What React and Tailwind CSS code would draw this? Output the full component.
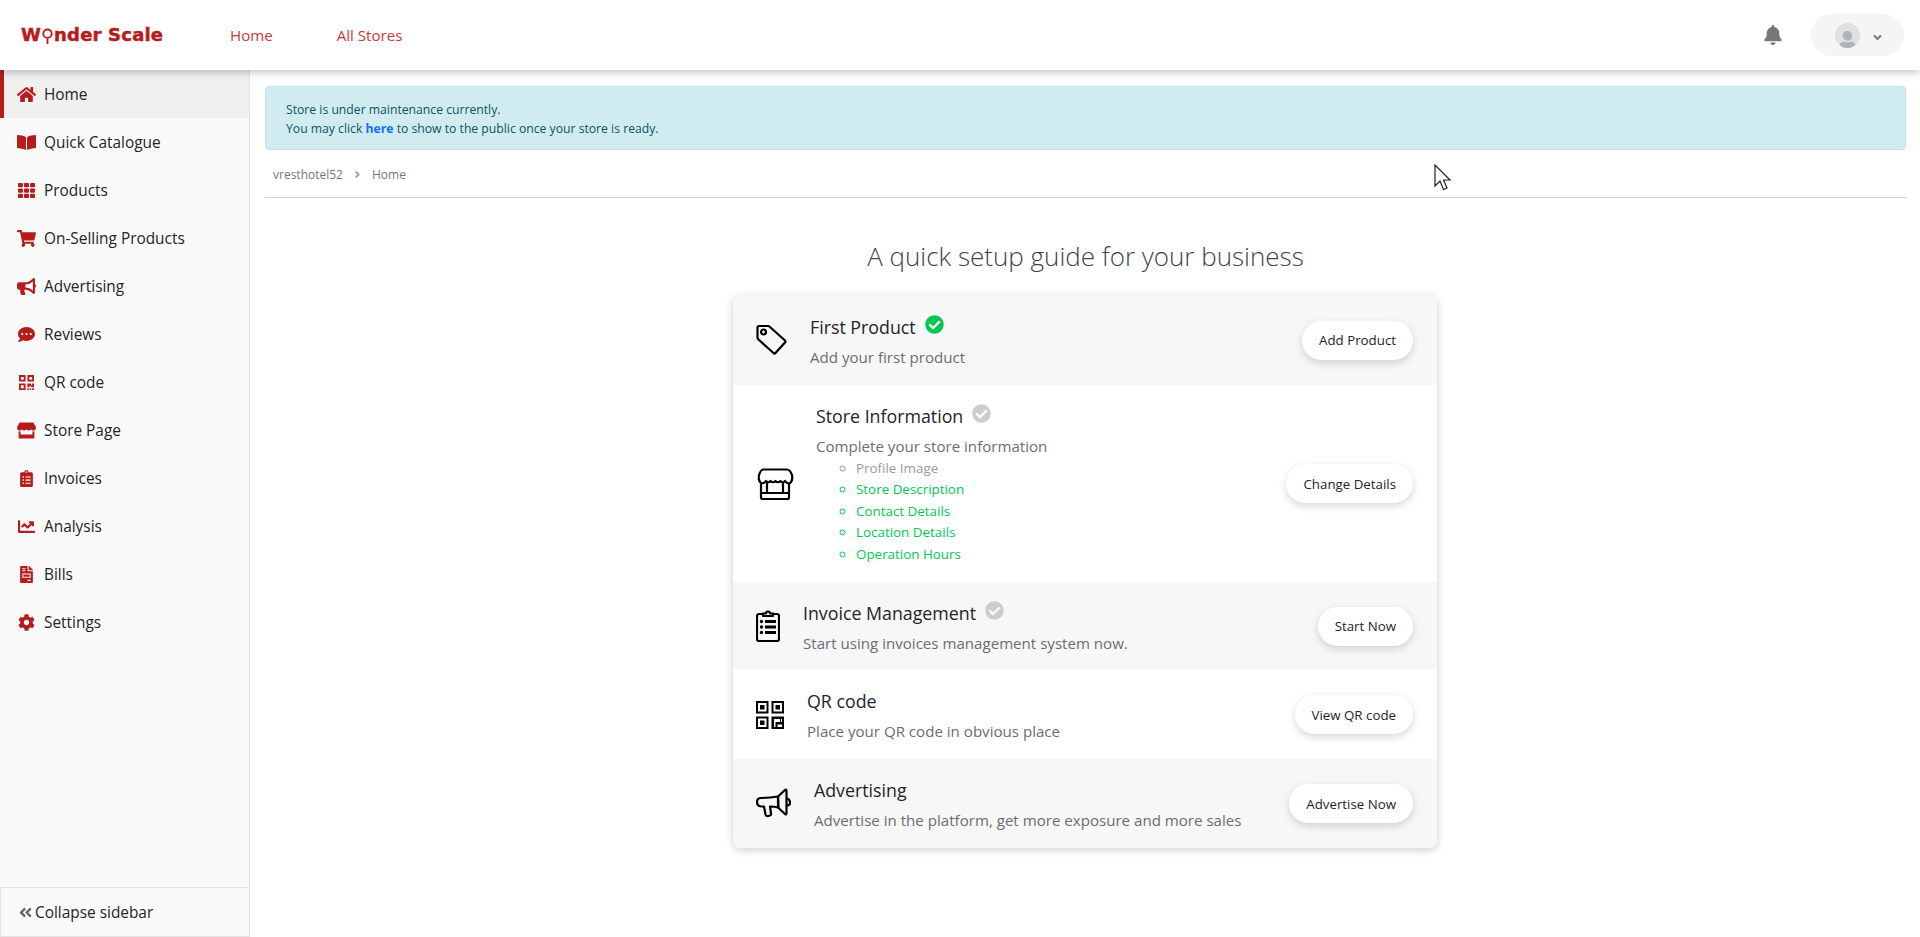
import {
  FaHome, FaBookOpen, FaTh, FaShoppingCart, FaBullhorn, FaCommentDots, FaStore,
  FaClipboardList, FaChartLine, FaFileInvoice, FaCog, FaAngleDoubleLeft, FaBell,
  FaCheckCircle, FaUser, FaAngleRight, FaAngleDown,
} from 'react-icons/fa';

function QrSmall() {
  return (
    <svg viewBox="0 0 16 16" className="w-[15px] h-[15px]" fill="currentColor">
      <path fillRule="evenodd" d="M0 0h7v7H0zM2 2v3h3V2zM9 0h7v7H9zM11 2v3h3V2zM0 9h7v7H0zM2 11v3h3v-3z" />
      <path d="M9 9h4v2h1V9h2v4h-3v-1h-2v1H9zM9 14h2v2H9zM12 14h1v2h-1zM14 14h2v2h-2z" />
    </svg>
  );
}

const menu = [
  { label: 'Home', icon: <FaHome className="text-[19px]" />, active: true },
  { label: 'Quick Catalogue', icon: <FaBookOpen className="text-[19px]" /> },
  { label: 'Products', icon: <FaTh className="text-[17px]" /> },
  { label: 'On-Selling Products', icon: <FaShoppingCart className="text-[19px]" /> },
  { label: 'Advertising', icon: <FaBullhorn className="text-[19px]" /> },
  { label: 'Reviews', icon: <FaCommentDots className="text-[17px]" /> },
  { label: 'QR code', icon: <QrSmall /> },
  { label: 'Store Page', icon: <FaStore className="text-[19px]" /> },
  { label: 'Invoices', icon: <FaClipboardList className="text-[17px]" /> },
  { label: 'Analysis', icon: <FaChartLine className="text-[17px]" /> },
  { label: 'Bills', icon: <FaFileInvoice className="text-[17px]" /> },
  { label: 'Settings', icon: <FaCog className="text-[17px]" /> },
];

function TagIcon() {
  return (
    <svg viewBox="0 0 32 32" className="w-[32px] h-[32px]" fill="none" stroke="#000" strokeWidth="2.200" strokeLinejoin="round">
      <path d="M1.500 3.500q0-1.500 1.500-1.500h9q1 0 2 1l15 13.500q1 1 0 2l-9.500 10.500q-1 1-2 0l-15-13.500q-1-1-1-2z" />
      <circle cx="7.500" cy="8" r="2.500" />
    </svg>
  );
}

function StoreIcon() {
  return (
    <svg viewBox="0 0 38 32" className="w-[38px] h-[32px]" fill="none" stroke="#000" strokeWidth="2.200" strokeLinejoin="round">
      <path d="M7 1.500h24q3 0 5 5.500 1 6-2 8-3 1-5-2-2 2.500-4.500 0-2.500 2.500-5 0-2.500 2.500-5 0-2.500 2.500-4.500 0-2 3-5 2-3-2-2-8 2-5.500 4-5.500z" />
      <path d="M5 16v13.500q0 1.500 1.500 1.500h25q1.500 0 1.500-1.500V16" />
      <path d="M5 25h28M11 15v10M27 15v10" />
    </svg>
  );
}

function ClipboardIcon() {
  return (
    <svg viewBox="0 0 24 32" className="w-[24px] h-[32px]" fill="none" stroke="#000" strokeWidth="2.200" strokeLinejoin="round">
      <rect x="1" y="4" width="22" height="27" rx="2" />
      <path d="M7 6V3.500h3a2 2 0 0 1 4 0h3V6z" fill="#fff" />
      <path d="M9 11.500h11M9 17h11M9 22.500h11" strokeWidth="3" />
      <circle cx="5.500" cy="11.500" r="1.700" fill="#000" stroke="none" />
      <circle cx="5.500" cy="17" r="1.700" fill="#000" stroke="none" />
      <circle cx="5.500" cy="22.500" r="1.700" fill="#000" stroke="none" />
    </svg>
  );
}

function QrIcon() {
  return (
    <svg viewBox="0 0 28 28" className="w-[28px] h-[28px]" fill="#000">
      <path fillRule="evenodd" d="M0 0h12.500v12.500H0zM2 2v8.500h8.500V2zM15.500 0H28v12.500H15.500zM17.500 2v8.500H26V2zM0 15.500h12.500V28H0zM2 17.500V26h8.500v-8.500z" />
      <path d="M4 4h4.500v4.500H4zM19.500 4H24v4.500h-4.500zM4 19.500h4.500V24H4z" />
      <path d="M15.500 15.500H28V28H15.500zM18 18V26h1.500v-5h4.500v-3zM21.500 23.500V26H26v-2.500zM25 18V21H26v-3z" fillRule="evenodd" />
    </svg>
  );
}

function MegaphoneIcon() {
  return (
    <svg viewBox="0 0 35 31" className="w-[35px] h-[31px]" fill="none" stroke="#000" strokeWidth="2.200" strokeLinejoin="round">
      <path d="M22 8.500L29 2q1.500-1 1.500 1v22q0 2-1.500 1l-7-6.500" />
      <path d="M22 8.500q-8 1.500-17 1.500-4 0-4 4t4 4.500h3l1.500 8q.5 2 2.500 1.500l2-.5q1.500-.5 1-2l-1-7q4 0 8.500 1z" />
      <path d="M22 8.500v10.500M30.500 10.500q3 0 3.500 3.500t-3.500 3.500" />
    </svg>
  );
}

const steps = [
  {
    title: 'First Product', desc: 'Add your first product', btn: 'Add Product',
    icon: <TagIcon />, gap: 'gap-[22px]', h: 'h-[90px]', grey: true, check: 'text-[#00c853]', radius: 'rounded-t-lg',
  },
  {
    title: 'Store Information', desc: 'Complete your store information', btn: 'Change Details',
    icon: <StoreIcon />, gap: 'gap-[22px]', h: 'h-[197px]', check: 'text-[#cccccc]',
    list: [
      { t: 'Profile Image', done: false },
      { t: 'Store Description', done: true },
      { t: 'Contact Details', done: true },
      { t: 'Location Details', done: true },
      { t: 'Operation Hours', done: true },
    ],
  },
  {
    title: 'Invoice Management', desc: 'Start using invoices management system now.', btn: 'Start Now',
    icon: <ClipboardIcon />, gap: 'gap-[23px]', h: 'h-[88px]', grey: true, check: 'text-[#cccccc]',
  },
  {
    title: 'QR code', desc: 'Place your QR code in obvious place', btn: 'View QR code',
    icon: <QrIcon />, gap: 'gap-[23px]', h: 'h-[89px]',
  },
  {
    title: 'Advertising', desc: 'Advertise in the platform, get more exposure and more sales', btn: 'Advertise Now',
    icon: <MegaphoneIcon />, gap: 'gap-[23px]', h: 'h-[89px]', grey: true, radius: 'rounded-b-lg',
  },
];

function SetupRow({ step }) {
  return (
    <div className={`flex items-center justify-between pl-[23px] pr-[24px] ${step.h} ${step.grey ? 'bg-[#f7f7f7]' : 'bg-white'} ${step.radius || ''}`}>
      <div className={`flex items-center ${step.gap}`}>
        <div className="shrink-0">{step.icon}</div>
        <div className="pt-[1px]">
          <div className="flex items-center gap-[9px] text-[17.800px] leading-[26px] text-[#212529]">
            {step.title}
            {step.check && <FaCheckCircle className={`text-[19px] -mt-[4px] ${step.check}`} />}
          </div>
          <div className="text-[15.100px] leading-[22px] mt-[6px] text-[#6c6c74]">{step.desc}</div>
          {step.list && (
            <ul className="list-[circle] mt-[1px] pl-[40px] text-[13.400px] leading-[21.500px]">
              {step.list.map((item) => (
                <li key={item.t} className={item.done ? 'text-[#00c853]' : 'text-[#9a9aa0]'}>{item.t}</li>
              ))}
            </ul>
          )}
        </div>
      </div>
      <button className="h-[39px] px-[17px] pt-[2px] rounded-full bg-white text-[13.300px] text-[#212529] shadow-[0_3px_8px_rgba(0,0,0,0.16)]">
        {step.btn}
      </button>
    </div>
  );
}

export default function App() {
  return (
    <div className="relative h-[937px] w-[1920px] overflow-hidden flex flex-col bg-white font-['Open_Sans',sans-serif] text-[#212529]">
      {/* Top bar */}
      <header className="relative z-10 h-[70px] shrink-0 flex items-center bg-white shadow-[0_2px_8px_rgba(0,0,0,0.25)] pl-[21px] pr-[16px]">
        <div className="w-[209px] flex items-center text-[#b71c1c] font-['DejaVu_Sans',sans-serif] font-bold text-[18px] tracking-[0.2px] [-webkit-text-stroke:0.5px_#b71c1c] leading-none">
          W
          <svg viewBox="0 0 14 18" className="w-[13px] h-[17px] mt-[3px]" fill="none" stroke="#b71c1c" strokeWidth="2">
            <circle cx="7" cy="6" r="4.500" />
            <path d="M7 11v6" />
          </svg>
          nder Scale
        </div>
        <nav className="flex items-center gap-[64px] text-[15.100px] text-[#c8393b]">
          <a>Home</a>
          <a>All Stores</a>
        </nav>
        <div className="ml-auto flex items-center gap-[28px]">
          <FaBell className="text-[20px] text-[#777777]" />
          <div className="w-[93px] h-[42px] rounded-full bg-[#f5f5f5] flex items-center pl-[24px] gap-[11px]">
            <div className="w-[25px] h-[25px] rounded-full bg-[#dee0e2] overflow-hidden flex items-end justify-center">
              <FaUser className="text-[19px] text-[#aeb3b7] -mb-[2px]" />
            </div>
            <FaAngleDown className="text-[13px] text-[#777777] mt-[4px]" />
          </div>
        </div>
      </header>

      <div className="flex flex-1 min-h-0">
        {/* Sidebar */}
        <aside className="w-[250px] shrink-0 flex flex-col justify-between bg-[#fafafa] border-r border-[#e4e4e4]">
          <div>
            {menu.map((item) => (
              <div
                key={item.label}
                className={`h-[48px] flex items-center text-[15.400px] border-l-4 ${item.active ? 'bg-[#f0f0f0] border-[#b71c1c]' : 'border-transparent'}`}
              >
                <span className="w-[20px] ml-[12px] mr-[1px] flex justify-center text-[#b71c1c]">{item.icon}</span>
                <span className="ml-[7px] mt-[2px]">{item.label}</span>
              </div>
            ))}
          </div>
          <div className="h-[50px] flex items-center gap-[2px] border-t border-l border-b border-[#e4e4e4] pl-[17px] text-[15.400px]">
            <FaAngleDoubleLeft className="text-[15px] text-[#666666]" />
            <span className="mt-[2px]">Collapse sidebar</span>
          </div>
        </aside>

        {/* Main */}
        <main className="flex-1 pl-[15px] pr-[14px] pt-[16px]">
          <div className="h-[64px] rounded-[4px] border border-[#bee5eb] bg-[#d1ecf1] pl-[20px] pt-[13px] text-[12.200px] leading-[19px] text-[#0c5460]">
            <div>Store is under maintenance currently.</div>
            <div>You may click <b className="text-[#0d6efd]">here</b> to show to the public once your store is ready.</div>
          </div>
          <div className="h-[48px] flex items-center gap-[9px] pl-[8px] pt-[2px] border-b border-[#cfd2d6] text-[12px] text-[#777777]">
            <span>vresthotel52</span>
            <FaAngleRight className="text-[11px] text-[#999999]" />
            <span>Home</span>
          </div>

          <h1 className="mt-[37px] text-center text-[26px] leading-[42px] font-light text-[#40454a]">
            A quick setup guide for your business
          </h1>

          <div className="mt-[18px] ml-[468px] w-[704px] rounded-lg shadow-[0_2px_8px_rgba(0,0,0,0.2)]">
            {steps.map((step) => <SetupRow key={step.title} step={step} />)}
          </div>
        </main>
      </div>

      {/* Mouse pointer caught in the capture */}
      <svg viewBox="0 0 18 28" className="absolute left-[1433px] top-[164px] w-[20px] h-[28px]" fill="#fff" stroke="#222" strokeWidth="1.200">
        <path d="M1 1v21l5-5 3.500 8.500 3.500-1.500-3.500-8H16z" />
      </svg>
    </div>
  );
}
